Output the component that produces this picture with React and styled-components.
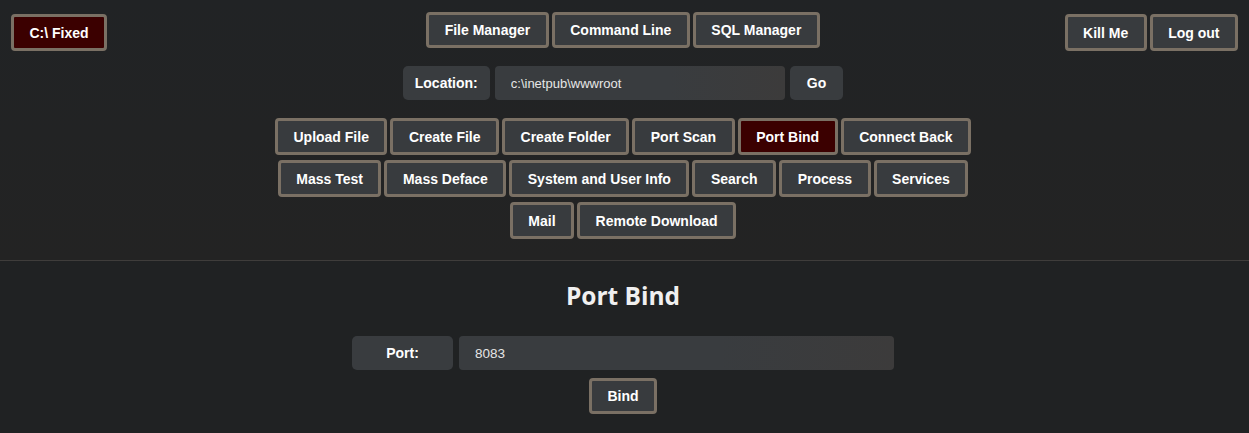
import React from "react"
import styled, { createGlobalStyle } from "styled-components"

const GlobalStyle = createGlobalStyle`
  html, body {
    margin: 0;
    background: #202223;
    font-family: "Liberation Sans", Arial, sans-serif;
    color: #fff;
  }
`

const Top = styled.div`
  background: linear-gradient(#212325, #232323);
  padding: 12px 11px 21px;
`

const Header = styled.div`
  display: grid;
  grid-template-columns: 1fr auto 1fr;
  align-items: start;
`

const Group = styled.div`
  display: flex;
  gap: 3px;
  justify-content: ${p => p.align || "center"};
  margin-top: ${p => p.offset || 0}px;
  margin-right: ${p => p.shift || 0}px;
`

const Button = styled.button`
  box-sizing: border-box;
  height: ${p => p.h || 37}px;
  padding: 0 15.5px;
  border: 3px solid #7a7064;
  border-radius: 4px;
  background: ${p => (p.active ? "#3b0000" : "#383b3e")};
  color: #fff;
  font-family: "Liberation Sans", Arial, sans-serif;
  font-weight: bold;
  font-size: 14px;
  white-space: nowrap;
  cursor: pointer;
`

const Row = styled.div`
  display: flex;
  justify-content: center;
  gap: ${p => p.gap || 3}px;
  margin-top: ${p => p.mt || 0}px;
  padding-right: 3px;
`

const Label = styled.div`
  box-sizing: border-box;
  height: 34px;
  width: ${p => p.w}px;
  display: flex;
  align-items: center;
  justify-content: center;
  background: #393c3f;
  border-radius: 5px;
  font-weight: bold;
  font-size: 14px;
`

const Input = styled.input`
  box-sizing: border-box;
  height: 34px;
  width: ${p => p.w}px;
  padding: 0 16px;
  border: none;
  border-radius: 4px;
  background: linear-gradient(90deg, #393c3f 60%, #3c3b3b);
  color: #e6e6e6;
  font-family: "Liberation Sans", Arial, sans-serif;
  font-size: ${p => p.fs || 13}px;
  outline: none;
`

const GoButton = styled.button`
  box-sizing: border-box;
  height: 34px;
  padding: 0 17px;
  border: none;
  border-radius: 5px;
  background: #393c3f;
  color: #fff;
  font-family: "Liberation Sans", Arial, sans-serif;
  font-weight: bold;
  font-size: 14px;
`

const Rule = styled.hr`
  margin: 0;
  border: none;
  height: 1px;
  background: #3f3d3b;
`

const Section = styled.div`
  display: flex;
  flex-direction: column;
  align-items: center;
  padding-bottom: 20px;
`

const Title = styled.h2`
  margin: 18px 3px 23px 0;
  font-family: "Open Sans", sans-serif;
  font-weight: bold;
  font-size: 24.5px;
  line-height: 34px;
  color: #f0f0f0;
`

const tools = [
  ["Upload File", "Create File", "Create Folder", "Port Scan", "Port Bind", "Connect Back"],
  ["Mass Test", "Mass Deface", "System and User Info", "Search", "Process", "Services"],
  ["Mail", "Remote Download"],
]

export default function App() {
  return (
    <>
      <GlobalStyle />
      <Top>
        <Header>
          <Group align="flex-start" offset={2}>
            <Button active>C:\ Fixed</Button>
          </Group>
          <Group shift={3}>
            <Button h={36}>File Manager</Button>
            <Button h={36}>Command Line</Button>
            <Button h={36}>SQL Manager</Button>
          </Group>
          <Group align="flex-end" offset={2}>
            <Button>Kill Me</Button>
            <Button>Log out</Button>
          </Group>
        </Header>
        <Row gap={5} mt={15}>
          <Label w={87}>Location:</Label>
          <Input w={290} defaultValue="c:\inetpub\wwwroot" />
          <GoButton>Go</GoButton>
        </Row>
        <Row mt={18}>
          {tools[0].map(t => (
            <Button key={t} active={t === "Port Bind"}>{t}</Button>
          ))}
        </Row>
        {tools.slice(1).map((row, i) => (
          <Row key={i} mt={5}>
            {row.map(t => (
              <Button key={t}>{t}</Button>
            ))}
          </Row>
        ))}
      </Top>
      <Rule />
      <Section>
        <Title>Port Bind</Title>
        <Row gap={6}>
          <Label w={101}>Port:</Label>
          <Input w={435} fs={13.5} defaultValue="8083" />
        </Row>
        <Row mt={8}>
          <Button h={36}>Bind</Button>
        </Row>
      </Section>
    </>
  )
}
